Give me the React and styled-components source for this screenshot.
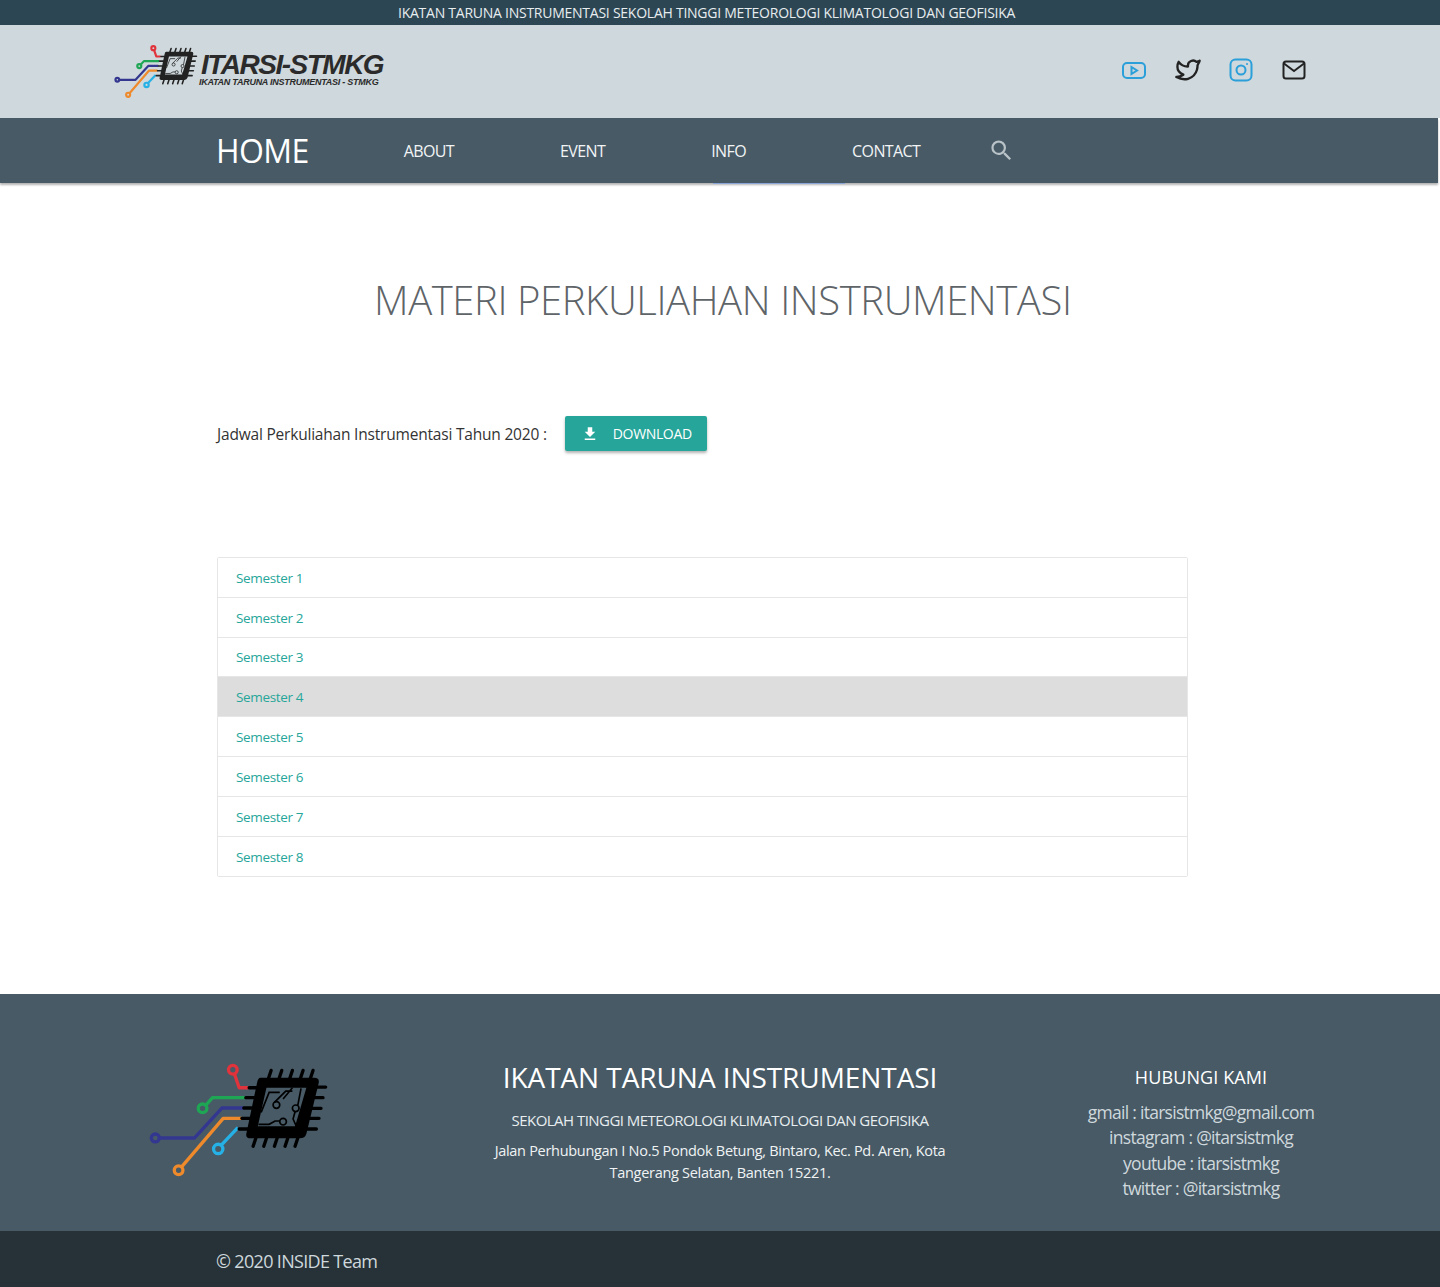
import styled, { createGlobalStyle } from "styled-components";
import { MdSearch, MdFileDownload } from "react-icons/md";
import { TbBrandTwitter } from "react-icons/tb";

const semesters = [1, 2, 3, 4, 5, 6, 7, 8];
const navLinks = ["ABOUT", "EVENT", "INFO", "CONTACT"];
const contacts = [
  "gmail : itarsistmkg@gmail.com",
  "instagram : @itarsistmkg",
  "youtube : itarsistmkg",
  "twitter : @itarsistmkg",
];

// chip + colored traces, coordinates taken from the footer logo
function ChipLogo({ width, height, chip, trace }) {
  return (
    <svg width={width} height={height} viewBox="50 30 550 360" fill="none">
      <g strokeWidth={trace} strokeLinejoin="round">
        <circle cx="311" cy="62" r="13" stroke="#e0333c" />
        <path d="M316 75 L330 116 H358" stroke="#e0333c" />
        <circle cx="220" cy="178" r="13" stroke="#1fa655" />
        <path d="M230 168 L250 146 H348" stroke="#1fa655" />
        <circle cx="78" cy="267" r="12" stroke="#34378f" />
        <path d="M90 267 H196 L278 177 H344" stroke="#34378f" />
        <circle cx="148" cy="364" r="13" stroke="#ee8a2b" />
        <path d="M157 354 L282 208 H338" stroke="#ee8a2b" />
        <circle cx="267" cy="300" r="14" stroke="#26b1e6" />
        <path d="M277 288 L326 236" stroke="#26b1e6" />
      </g>
      <g stroke={chip} strokeWidth="10" strokeLinecap="round">
        <path d="M418 88 L426 64 M450 88 L458 64 M482 88 L490 64 M514 88 L522 64 M544 88 L552 64" />
        <path d="M372 292 L380 268 M404 292 L412 268 M436 292 L444 268 M468 292 L476 268 M498 292 L506 268" />
        <path d="M360 116 H384 M350 146 H376 M344 177 H370 M338 208 H364 M330 240 H356" />
        <path d="M560 114 H590 M552 146 H582 M546 178 H576 M540 208 H570 M532 240 H562" />
      </g>
      <path
        d="M394 86 H556 Q572 86 569 102 L532 254 Q528 268 512 268 H364 Q348 268 352 252 L384 100 Q387 86 394 86 Z M412 116 L386 232 H498 L532 116 Z"
        fill={chip}
        fillRule="evenodd"
      />
      <g stroke={chip} strokeWidth="5">
        <path d="M396 190 L420 130 H452 M436 160 L470 126 H490 M490 116 L462 150 M516 118 L506 170" />
        <path d="M388 226 H420 L438 216 H452 M498 188 L492 210 L502 232" />
        <circle cx="442" cy="168" r="10" />
        <circle cx="500" cy="178" r="10" />
        <circle cx="462" cy="218" r="10" />
      </g>
    </svg>
  );
}

function YoutubeIcon() {
  return (
    <svg width="24" height="17" viewBox="0 0 24 17" fill="none" stroke="#2b9fd9" strokeWidth="2">
      <rect x="1" y="1" width="22" height="15" rx="4" />
      <path d="M9.5 5 L15 8.5 L9.5 12 Z" />
    </svg>
  );
}

function InstagramIcon() {
  return (
    <svg width="24" height="24" viewBox="0 0 24 24" fill="none" stroke="#2b9fd9" strokeWidth="2">
      <rect x="1.5" y="1.5" width="21" height="21" rx="5" />
      <circle cx="12" cy="12" r="4.5" />
      <circle cx="18" cy="6" r="0.6" fill="#2b9fd9" strokeWidth="1" />
    </svg>
  );
}

function MailIcon() {
  return (
    <svg width="24" height="20" viewBox="0 0 24 20" fill="none" stroke="#222" strokeWidth="2">
      <rect x="1.5" y="1.5" width="21" height="17" rx="2.5" />
      <path d="M2 3.5 L12 11 L22 3.5" />
    </svg>
  );
}

export default function App() {
  return (
    <Page>
      <GlobalStyle />
      <TopBar>IKATAN TARUNA INSTRUMENTASI SEKOLAH TINGGI METEOROLOGI KLIMATOLOGI DAN GEOFISIKA</TopBar>
      <Header>
        <Brand>
          <ChipLogo width={85} height={56} chip="#222" trace={14} />
          <BrandText>
            <BrandName>ITARSI-STMKG</BrandName>
            <BrandSub>IKATAN TARUNA INSTRUMENTASI - STMKG</BrandSub>
          </BrandText>
        </Brand>
        <Socials>
          <YoutubeIcon />
          <TbBrandTwitter size={28} color="#222" />
          <InstagramIcon />
          <MailIcon />
        </Socials>
      </Header>
      <Nav>
        <NavHome>HOME</NavHome>
        {navLinks.map((link) => (
          <NavLink key={link}>{link}</NavLink>
        ))}
        <SearchIcon />
        <NavSliver />
      </Nav>
      <Main>
        <Title>MATERI PERKULIAHAN INSTRUMENTASI</Title>
        <ScheduleRow>
          <ScheduleLabel>Jadwal Perkuliahan Instrumentasi Tahun 2020 :</ScheduleLabel>
          <DownloadButton>
            <MdFileDownload size={18} />
            DOWNLOAD
          </DownloadButton>
        </ScheduleRow>
        <Collection>
          {semesters.map((n) => (
            <CollectionItem key={n} $active={n === 4}>
              Semester {n}
            </CollectionItem>
          ))}
        </Collection>
      </Main>
      <Footer>
        <FooterLogo>
          <ChipLogo width={183} height={120} chip="#000" trace={10} />
        </FooterLogo>
        <FooterCenter>
          <FooterTitle>IKATAN TARUNA INSTRUMENTASI</FooterTitle>
          <FooterSub>SEKOLAH TINGGI METEOROLOGI KLIMATOLOGI DAN GEOFISIKA</FooterSub>
          <FooterAddress>
            Jalan Perhubungan I No.5 Pondok Betung, Bintaro, Kec. Pd. Aren, Kota Tangerang Selatan, Banten 15221.
          </FooterAddress>
        </FooterCenter>
        <FooterContact>
          <ContactTitle>HUBUNGI KAMI</ContactTitle>
          {contacts.map((line) => (
            <ContactLine key={line}>{line}</ContactLine>
          ))}
        </FooterContact>
      </Footer>
      <BottomBar>© 2020 INSIDE Team</BottomBar>
    </Page>
  );
}

const GlobalStyle = createGlobalStyle`
  body {
    margin: 0;
    background: #fff;
    font-family: "Open Sans", "Noto Sans", sans-serif;
  }
`;
const Page = styled.div`
  width: 1440px;
  height: 1287px;
  overflow: hidden;
`;
const TopBar = styled.div`
  height: 25px;
  background-color: #2d4654;
  color: #e8edef;
  font-size: 14px;
  line-height: 26px;
  letter-spacing: -0.25px;
  padding-left: 398px;
  white-space: nowrap;
`;
const Header = styled.header`
  height: 93px;
  box-sizing: border-box;
  background-color: #cfd8dc;
  display: flex;
  align-items: center;
  justify-content: space-between;
  padding: 0 134px 3px 113px;
`;
const Brand = styled.div`
  display: flex;
  align-items: center;
  gap: 3px;
  margin-top: 1px;
`;
const BrandText = styled.div`
  display: flex;
  flex-direction: column;
  color: #2b2b2b;
  font-family: "Liberation Sans", sans-serif;
  font-style: italic;
  font-weight: 700;
`;
const BrandName = styled.span`
  font-size: 28px;
  line-height: 22px;
  letter-spacing: -1.5px;
`;
const BrandSub = styled.span`
  font-size: 9px;
  line-height: 10px;
  margin: 1px 0 0 -2px;
  letter-spacing: -0.26px;
`;
const Socials = styled.div`
  display: flex;
  align-items: center;
  gap: 28px;
  svg:nth-child(3) {
    margin: 0 1px 0 -1px;
  }
`;
const Nav = styled.nav`
  position: relative;
  height: 65px;
  width: 1438px;
  background-color: #475a66;
  box-shadow: 0 2px 2px rgba(0, 0, 0, 0.3);
  display: flex;
  align-items: center;
  gap: 106px;
  padding-left: 216px;
  box-sizing: border-box;
`;
const NavHome = styled.a`
  color: #fff;
  font-size: 32px;
  letter-spacing: -0.6px;
  margin-right: -11px;
`;
const NavLink = styled.a`
  color: #f2f4f5;
  font-size: 16px;
  letter-spacing: -0.6px;
`;
const SearchIcon = styled(MdSearch)`
  color: #b9c2c7;
  font-size: 27px;
  margin: 0 0 0 -38px;
`;
const NavSliver = styled.span`
  position: absolute;
  left: 713px;
  top: 65px;
  width: 132px;
  height: 1px;
  background-color: #8aa6d6;
`;
const Main = styled.main`
  height: 811px;
  box-sizing: border-box;
  padding: 90px 0 0 217px;
`;
const Title = styled.h1`
  margin: 0 0 0 -217px;
  padding-left: 374px;
  font-size: 40px;
  line-height: 54px;
  font-weight: 300;
  color: #5e6468;
  letter-spacing: -0.4px;
  white-space: nowrap;
`;
const ScheduleRow = styled.div`
  display: flex;
  align-items: center;
  gap: 18px;
  margin-top: 89px;
`;
const ScheduleLabel = styled.span`
  color: #333;
  font-size: 15.5px;
  letter-spacing: -0.2px;
`;
const DownloadButton = styled.button`
  width: 142px;
  height: 35px;
  border: none;
  border-radius: 2px;
  background-color: #26a69a;
  color: #fff;
  font-family: inherit;
  font-size: 14px;
  letter-spacing: -0.35px;
  display: flex;
  align-items: center;
  gap: 14px;
  padding: 0 0 0 16px;
  box-shadow: 0 2px 3px rgba(0, 0, 0, 0.3);
`;
const Collection = styled.ul`
  list-style: none;
  margin: 106px 0 0;
  padding: 0;
  width: 971px;
  box-sizing: border-box;
  border: 1px solid #e6e6e6;
  border-radius: 2px;
`;
const CollectionItem = styled.li`
  height: 39.8px;
  box-sizing: border-box;
  padding: 1px 0 0 18px;
  display: flex;
  align-items: center;
  font-size: 13.5px;
  letter-spacing: -0.35px;
  color: #26a69a;
  background-color: ${(props) => (props.$active ? "#dddddd" : "#fff")};
  border-bottom: 1px solid #e6e6e6;
  &:last-child {
    border-bottom: none;
  }
`;
const Footer = styled.footer`
  height: 237px;
  background-color: #475a66;
  display: grid;
  grid-template-columns: 480px 480px 1fr;
  color: #fff;
`;
const FooterLogo = styled.div`
  padding: 65px 0 0 146px;
`;
const FooterCenter = styled.div`
  text-align: center;
  padding-top: 63px;
`;
const FooterTitle = styled.h2`
  margin: 0;
  font-size: 28px;
  line-height: 40px;
  font-weight: 400;
  letter-spacing: -0.07px;
  white-space: nowrap;
`;
const FooterSub = styled.p`
  margin: 12px 0 0;
  font-size: 15px;
  line-height: 22px;
  letter-spacing: -0.54px;
  color: #e8edef;
  white-space: nowrap;
`;
const FooterAddress = styled.p`
  margin: 9px auto 0;
  width: 470px;
  font-size: 14.5px;
  line-height: 21.5px;
  letter-spacing: -0.3px;
  color: #f0f3f4;
`;
const FooterContact = styled.div`
  width: 300px;
  margin-left: 91px;
  padding-top: 70px;
  text-align: center;
`;
const ContactTitle = styled.h3`
  margin: 0 0 9.5px;
  font-size: 18px;
  line-height: 26px;
  font-weight: 400;
  letter-spacing: 0.1px;
`;
const ContactLine = styled.div`
  font-size: 17.5px;
  line-height: 25.5px;
  letter-spacing: -0.72px;
  color: #cfd8dc;
  white-space: nowrap;
`;
const BottomBar = styled.div`
  height: 56px;
  box-sizing: border-box;
  padding-left: 216px;
  background-color: #263238;
  color: #cfd8dc;
  font-size: 18px;
  line-height: 60px;
  letter-spacing: -0.67px;
`;
